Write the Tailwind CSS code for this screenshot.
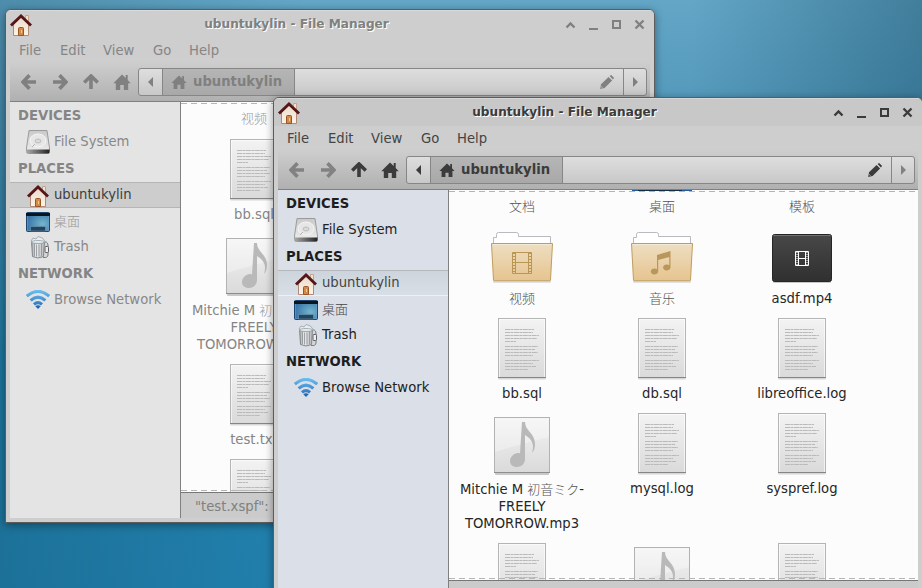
<!DOCTYPE html>
<html lang="en">
<head>
<meta charset="utf-8">
<title>File Manager</title>
<script src="https://cdn.jsdelivr.net/npm/@tailwindcss/browser@4"></script>
</head>
<body class="w-[922px] h-[588px] overflow-hidden">
<svg class="absolute w-0 h-0" aria-hidden="true">
  <defs>
    <linearGradient id="gWall" x1="0" y1="0" x2="0" y2="1"><stop offset="0" stop-color="#e8dccf"/><stop offset="1" stop-color="#fff3e6"/></linearGradient>
    <linearGradient id="gDoc" x1="0" y1="0" x2="0" y2="1"><stop offset="0" stop-color="#f3f3f3"/><stop offset="1" stop-color="#dadada"/></linearGradient>
    <linearGradient id="gFolder" x1="0" y1="0" x2="0" y2="1"><stop offset="0" stop-color="#eedec2"/><stop offset="1" stop-color="#e6c48f"/></linearGradient>
    <linearGradient id="gVid" x1="0" y1="0" x2="0" y2="1"><stop offset="0" stop-color="#484848"/><stop offset="1" stop-color="#303030"/></linearGradient>
    <linearGradient id="gDrive" x1="0" y1="0" x2="0" y2="1"><stop offset="0" stop-color="#c9c9c9"/><stop offset="1" stop-color="#f0f0f0"/></linearGradient>
    <linearGradient id="gBase" x1="0" y1="0" x2="1" y2="0"><stop offset="0" stop-color="#aaa"/><stop offset="1" stop-color="#222"/></linearGradient>
    <radialGradient id="gDesk" cx=".7" cy=".6" r=".7"><stop offset="0" stop-color="#74b6cc"/><stop offset="1" stop-color="#3a73a8"/></radialGradient>
    <linearGradient id="gCan" x1="0" y1="0" x2="1" y2="0"><stop offset="0" stop-color="#9da0a4"/><stop offset=".35" stop-color="#ededee"/><stop offset="1" stop-color="#b5b7ba"/></linearGradient>
    <linearGradient id="gWifi" gradientUnits="userSpaceOnUse" x1="0" y1="0" x2="0" y2="19"><stop offset="0" stop-color="#6cc0f0"/><stop offset="1" stop-color="#2468b4"/></linearGradient>
  </defs>
  <symbol id="house" viewBox="0 0 22 22">
    <path d="M15.500 1.500h3v7h-3z" fill="#efe2d4" stroke="#c7a489"/>
    <path d="M3.500 10.500L11 3l7.500 7.500v11h-15z" fill="url(#gWall)" stroke="#b08a78"/>
    <path d="M8.500 21.500v-7q0-1 1-1h3q1 0 1 1v7z" fill="#d08a4c" stroke="#9a5524"/>
    <path d="M11.500 16v3" stroke="#f3c894"/>
    <path d="M1 11.500L11 2l10 9.500" fill="none" stroke="#571617" stroke-width="2.900"/>
  </symbol>
  <symbol id="home" viewBox="0 0 18 16"><path d="M9 .5L.3 9.200h2.500V16h4.400v-5h3.600v5h4.400V9.200h2.500L14.700 6V1h-2v3.100z" fill="currentColor"/></symbol>
  <symbol id="arrow" viewBox="0 0 16 16"><path d="M8.500 1.200L2 8l6.500 6.800M2.500 8H15" fill="none" stroke="currentColor" stroke-width="3.600"/></symbol>
  <symbol id="pencil" viewBox="0 0 14 14"><path d="M1 9.200L8.600 1.900l3.500 3.500L4.600 13 .2 13.900zM9.600 1L11.100 0l3 2.900-1.200 1.600z" fill="currentColor"/><path d="M1.300 11.600l1.200 1.100" stroke="#ddd" stroke-width=".9"/></symbol>
  <symbol id="drive" viewBox="0 0 24 24">
    <path d="M3 .5h18L23.500 18v3.500q0 2-2 2h-19q-2 0-2-2V18z" fill="url(#gDrive)" stroke="#9b9b9b"/>
    <path d="M.5 19.500h23v2.500q0 1.500-1.500 1.500H2Q.5 23.500.5 22z" fill="url(#gBase)"/>
    <ellipse cx="12" cy="10.500" rx="8" ry="6.500" fill="#e6e6e6" stroke="#f6f6f6"/>
    <ellipse cx="12" cy="11" rx="3" ry="2" fill="#d9d9d9" stroke="#b5b5b5" stroke-width=".8"/>
    <path d="M6 17l3-3" stroke="#b5b5b5"/>
  </symbol>
  <symbol id="desk" viewBox="0 0 24 20">
    <rect x=".5" y=".5" width="23" height="19" rx="1" fill="url(#gDesk)" stroke="#1c4672"/>
    <path d="M0 1h24v3H0z" fill="#101418"/><path d="M1.500 4v14.500h21V4" fill="none" stroke="#6d9fc8" stroke-opacity=".6"/>
    <path d="M4.500 19v-4.500h15V19z" fill="#24435f" stroke="#75a5c0" stroke-opacity=".5"/>
  </symbol>
  <symbol id="trash" viewBox="0 0 20 23">
    <path d="M12.500 6.500q5-2 5.500 2.500v10q0 3-5 2.500" fill="#d5d6d8" stroke="#777b80"/>
    <rect x="15" y="10.500" width="3.500" height="6" rx="1" fill="#eee" stroke="#5a5e63"/>
    <path d="M1.500 5h13l-1 15.500q-5.500 3-11 0z" fill="url(#gCan)" stroke="#84878a"/>
    <path d="M4.500 8v12M6.500 8.500v12M9 8.500v12M11.500 8v12" stroke="#8b8f93" stroke-width=".8"/>
    <path d="M1 5l2-3 3 1 2-2.500 3 1 2 1 2 3-2.500 2H4z" fill="#e5eef2" stroke="#9ba0a4" stroke-width=".8"/>
    <ellipse cx="8" cy="6" rx="6.500" ry="1.500" fill="#e2edf2" stroke="#9ba0a4" stroke-width=".8"/>
  </symbol>
  <symbol id="wifi" viewBox="0 0 24 19">
    <g fill="none" stroke="url(#gWifi)" stroke-width="3.100"><path d="M.8 6.200Q12-3.500 23.200 6.200"/><path d="M4.600 10.400Q12 4 19.400 10.400"/><path d="M8 14.300Q12 10.800 16 14.300"/></g>
    <path d="M9.300 16.300Q12 14 14.700 16.300L12 19z" fill="#2468b4"/>
  </symbol>
  <symbol id="doc" viewBox="0 0 50 64">
    <rect x="1" y="60" width="48" height="1.500" rx="1" fill="#000" opacity=".15"/>
    <rect x="1.500" y=".5" width="47" height="59" fill="url(#gDoc)" stroke="#b5b5b5"/>
    <path d="M2.500 59V1.500h45V59" fill="none" stroke="#fff" stroke-opacity=".6"/>
    <path d="M1 59.500h48" stroke="#858585"/>
    <path d="M8 11.500h29M8 14.500h28M8 17.500h34M8 20.500h32M8 23.500h11M8 28.500h33M8 31.500h30M8 34.500h33M8 37.500h28M8 42.500h34M8 45.500h28M8 48.500h31M8 51.500h23" stroke="#bababa" stroke-dasharray="5 .5 3 .4"/>
  </symbol>
  <symbol id="note" viewBox="0 0 58 60">
    <rect x="2" y="55.500" width="54" height="2.500" rx="1" fill="#000" opacity=".2"/>
    <rect x="1.500" y=".5" width="55" height="55" fill="url(#gDoc)" stroke="#b2b2b2"/>
    <path d="M2 1h54v19Q28 27 2 35z" fill="#fff" opacity=".3"/>
    <path d="M1 55.500h56" stroke="#8d8d8d"/>
    <path d="M29 5h3c0 9 10 11 10 22 0 4-1 7-3 9 3-10-1-14-7-18v24c0 5-4 8-8 8-4.500 0-7-2.500-7-6 0-5 6-9.500 10-7.500z" fill="#b9b9b9"/>
  </symbol>
  <symbol id="folder" viewBox="0 0 62 52">
    <rect x="2" y="48" width="58" height="3" rx="1" fill="#000" opacity=".1"/>
    <path d="M2.500 13V5.500h3v-3q0-2 2-2h18q2 0 2 2v2h32V13" fill="#fff" stroke="#b9b9bf"/>
    <path d="M.5 11.500h61L59.500 48q0 .8-1 .8h-55q-1 0-1-.8z" fill="url(#gFolder)" stroke="#bd9d5e"/>
    <path d="M1.500 12.500h59" stroke="#f8efdc" stroke-opacity=".7"/>
  </symbol>
  <symbol id="vfolder" viewBox="0 0 62 52"><use href="#folder" width="62" height="52"/>
    <path d="M21.500 20.500h19v21h-19zM24.500 20v22M37.500 20v22M25 30.500h12" fill="none" stroke="#b99654"/><path d="M23 21v21M39 21v21" stroke="#b99654" stroke-width="2" stroke-dasharray="1 2"/>
  </symbol>
  <symbol id="mfolder" viewBox="0 0 62 52"><use href="#folder" width="62" height="52"/>
    <path d="M26 23l13.500-4v16.500a3.700 3 0 1 1-1.200-2.200V25L27.200 28v11.500a3.700 3 0 1 1-1.200-2.200z" fill="#b9975a"/>
  </symbol>
  <symbol id="video" viewBox="0 0 60 50">
    <rect x="1" y="46" width="58" height="3" rx="1" fill="#000" opacity=".2"/>
    <rect x=".5" y=".5" width="59" height="47" rx="2" fill="url(#gVid)" stroke="#252525"/>
    <path d="M1.500 1.500h57" stroke="#707070"/>
    <path d="M23.500 17.500h13v14h-13zM26.500 17.500v14M33.500 17.500v14M26.500 24.500h7" fill="none" stroke="#fff"/><path d="M25 18v14M35 18v14" stroke="#fff" stroke-dasharray="1 1"/>
  </symbol>
  <symbol id="deskbig" viewBox="0 0 60 10"><path d="M0 0h60v8H0z" fill="#225a9c"/><path d="M6 0h44v8H6z" fill="#162d48"/></symbol>
</svg>

<main id="desktop" class="relative w-[922px] h-[588px] overflow-hidden bg-[linear-gradient(90deg,#0d435c40_0%,#0d435c00_33%,#0d435c00_75%,#0d435c66_100%),linear-gradient(180deg,#63a6c6_0%,#5499bb_18%,#2384b0_60%,#2180ad_100%)] font-['DejaVu_Sans','Noto_Sans_CJK_SC',sans-serif] text-[13.2px]"></main>

<script>
const svg = (id, w, h, cls = '') => `<svg class="shrink-0 ${cls}" width="${w}" height="${h}"><use href="#${id}" width="${w}" height="${h}"/></svg>`;
const cjk = t => t.replace(/[\u3040-\u9fff]+/g, m => `<span class="inline-block h-[13px] text-[13px] font-light opacity-80 font-['Noto_Sans_CJK_SC',sans-serif] leading-[13px]">${m}</span>`);
const cell = ([id, w, h, drop, label, shift = '']) => `<div class="w-[140px] flex flex-col items-center"><div class="h-[64px] shrink-0 flex items-end justify-center">${id ? svg(id, w, h, drop) : ''}</div><div class="${shift || 'mt-[5px]'} text-center">${label.split('\n').map(l => `<div class="h-[17px] leading-[17px] whitespace-nowrap">${cjk(l)}</div>`).join('')}</div></div>`;
const doc = label => ['doc', 50, 64, '-mb-[2px]', label];
const mus = label => ['note', 58, 60, '-mb-[2px]', label, 'mt-[6px]'];
const side = (icon, w, h, text, cls, gap) => `<div class="flex items-center pl-[16px] ${cls}"><div class="w-6 mr-1 flex ${gap}">${svg(icon, w, h)}</div><span class="whitespace-nowrap">${cjk(text)}</span></div>`;

function windowHtml(o) {
  const a = o.active;
  const head = a ? 'text-[#1d1d1d]' : 'text-[#858585]';
  const dim = a ? 'text-[#828282]' : 'text-[#808080]';
  const ink = a ? 'text-[#3b3b3b]' : 'text-[#808080]';
  return `
  <section class="absolute ${o.place} w-[650px] rounded-t-[6px] border border-[#5c5c5c] bg-[#cecece] flex flex-col overflow-hidden shadow-[0_2px_8px_rgba(0,0,0,0.4)]">
    <header class="h-[28px] shrink-0 flex items-center ${a ? 'bg-[#c8c8c8]' : 'bg-[#cecece]'} shadow-[inset_0_1px_0_rgba(255,255,255,0.25)] ${ink}">
      ${svg('house', 22, 22, 'ml-[4px] mt-[1px]')}
      <h1 class="flex-1 text-center text-[12.15px] font-bold whitespace-nowrap pt-px pr-[3px] [text-shadow:1px_1px_0_#fff]"><span class="inline-block">ubuntukylin - File Manager</span></h1>
      <svg class="shrink-0 mr-[8px] mt-px" width="82" height="14" viewBox="0 0 82 14" fill="none" stroke="currentColor"><path d="M2.500 9.500L6.500 5.500l4 4" stroke-width="2.400"/><path d="M25 11h9" stroke-width="2"/><path d="M49 3h7v7h-7z" stroke-width="2"/><path d="M71.500 2.500l8 8M79.500 2.500l-8 8" stroke-width="2.300"/></svg>
    </header>
    <nav class="h-[24px] shrink-0 flex items-center pt-[2px] pl-[13px] ${a ? 'text-[#444]' : 'text-[#858585]'}">
      <span class="w-[41px]">File</span><span class="w-[43px]">Edit</span><span class="w-[50px]">View</span><span class="w-[36px]">Go</span><span>Help</span>
    </nav>
    <div class="h-[40px] shrink-0 mx-[4px] pt-[6px] border-b border-[#808080] bg-gradient-to-b from-[#cecece] to-[#b0b0b0] flex">
      <div class="w-[128px] h-[28px] pl-[11px] flex items-center ${ink}">
        ${svg('arrow', 16, 16, dim + ' mr-[15px]')}${svg('arrow', 16, 16, dim + ' rotate-180 mr-[15px]')}${svg('arrow', 16, 16, 'rotate-90 mr-[14px]')}${svg('home', 18, 16)}
      </div>
      <div class="w-[509px] h-[28px] rounded-[3px] border border-[#868686] bg-gradient-to-b from-[#dedede] to-[#c8c8c8] flex overflow-hidden">
        <div class="w-[23px] flex items-center justify-center ${ink}"><svg width="5" height="10"><path d="M5 0v10L0 5z" fill="currentColor"/></svg></div>
        <div class="w-[133px] border-x border-[#868686] bg-gradient-to-b from-[#b5b5b5] to-[#a8a8a8] flex items-center pl-[8px] font-bold ${ink}">${svg('home', 16, 14, 'mr-[6px]')}<span>ubuntukylin</span></div>
        <div class="flex-1 flex items-center justify-end pr-[9px] ${ink}">${svg('pencil', 14, 14)}</div>
        <div class="w-[23px] border-l border-[#868686] flex items-center justify-center ${dim}"><svg width="5" height="10"><path d="M0 0v10l5-5z" fill="currentColor"/></svg></div>
      </div>
    </div>
    <div class="${o.body} mx-[4px] flex">
      <aside class="w-[170px] shrink-0 ${a ? 'bg-[#dbdfe7] text-[#222]' : 'bg-[#e4e4e4] text-[#888]'}">
        <div class="h-[26px] leading-[28px] pl-2 font-bold ${head}">DEVICES</div>
        ${side('drive', 24, 24, 'File System', 'h-[27px]', '')}
        <div class="h-[27px] leading-[27px] pl-2 font-bold ${head}">PLACES</div>
        ${side('house', 22, 22, 'ubuntukylin', 'h-[26px] border-y ' + (a ? 'border-t-[#b4b8bd] border-b-[#edf1f5] bg-gradient-to-b from-[#cdd4dc] to-[#d8dfe7] text-[#444]' : 'border-[#b5b5b5] bg-[#cdcdcd] text-[#3c3c3c]'), 'pl-[1px] pt-px')}
        ${side('desk', 24, 20, '桌面', 'h-[27px]', '')}
        ${side('trash', 20, 23, 'Trash', 'h-[24px]', 'pl-[4px]')}
        <div class="h-[28px] leading-[30px] pl-2 font-bold ${head}">NETWORK</div>
        ${side('wifi', 24, 19, 'Browse Network', 'h-[25px]', '')}
      </aside>
      <div class="flex-1 min-w-0 border-l border-[#808080] flex flex-col">
        <div class="relative ${o.view} shrink-0 overflow-hidden border-b border-[#777] bg-[#fcfcfc] ${a ? 'text-[#262626]' : 'text-[#858585]'}">
          <div class="${o.scroll} pl-[3px] flex flex-col">${o.rows.map(([h, items]) => `<div class="${h} shrink-0 flex">${items.map(cell).join('')}</div>`).join('')}</div>
          <div class="absolute left-0 top-px w-full h-px bg-[repeating-linear-gradient(90deg,#b5b5b5_0_6px,transparent_6px_10px)]"></div>
          <div class="absolute left-0 bottom-px w-full h-px bg-[repeating-linear-gradient(90deg,#b5b5b5_0_6px,transparent_6px_10px)]"></div>
        </div>
        <div class="flex-1 bg-[#cbcbcb] pl-[14px] pt-[5px] leading-[17px] text-[#808080]">${o.status}</div>
      </div>
    </div>
  </section>`;
}
document.getElementById('desktop').innerHTML =
  windowHtml({ active: false, place: 'left-[5px] top-[9px] h-[514px]', body: 'h-[416px]', view: 'h-[391px]', scroll: '-mt-[60px]', status: '"test.xspf":',
    rows: [['h-[95px]', [['vfolder', 62, 52, 'mb-[3px]', '视频', 'mt-[4px]']]], ['h-[95px]', [doc('bb.sql')]], ['h-[130px]', [mus('Mitchie M 初音ミク-\nFREELY\nTOMORROW.mp3')]], ['h-[95px]', [doc('test.txt')]], ['h-[95px]', [doc('')]]] }) +
  windowHtml({ active: true, place: 'left-[273px] top-[97px] h-[520px]', body: 'h-[424px]', view: 'h-[391px]', scroll: '-mt-[61px]', status: '',
    rows: [['h-[92px]', [['', 0, 0, '', '文档'], ['deskbig', 60, 10, '', '桌面'], ['', 0, 0, '', '模板']]],
      ['h-[95px]', [['vfolder', 62, 52, 'mb-px', '视频'], ['mfolder', 62, 52, 'mb-px', '音乐'], ['video', 60, 50, 'mb-px', 'asdf.mp4']]],
      ['h-[95px]', [doc('bb.sql'), doc('db.sql'), doc('libreoffice.log')]],
      ['h-[130px]', [mus('Mitchie M 初音ミク-\nFREELY\nTOMORROW.mp3'), doc('mysql.log'), doc('syspref.log')]],
      ['h-[95px]', [doc(''), mus(''), doc('')]]] });
</script>
</body>
</html>
